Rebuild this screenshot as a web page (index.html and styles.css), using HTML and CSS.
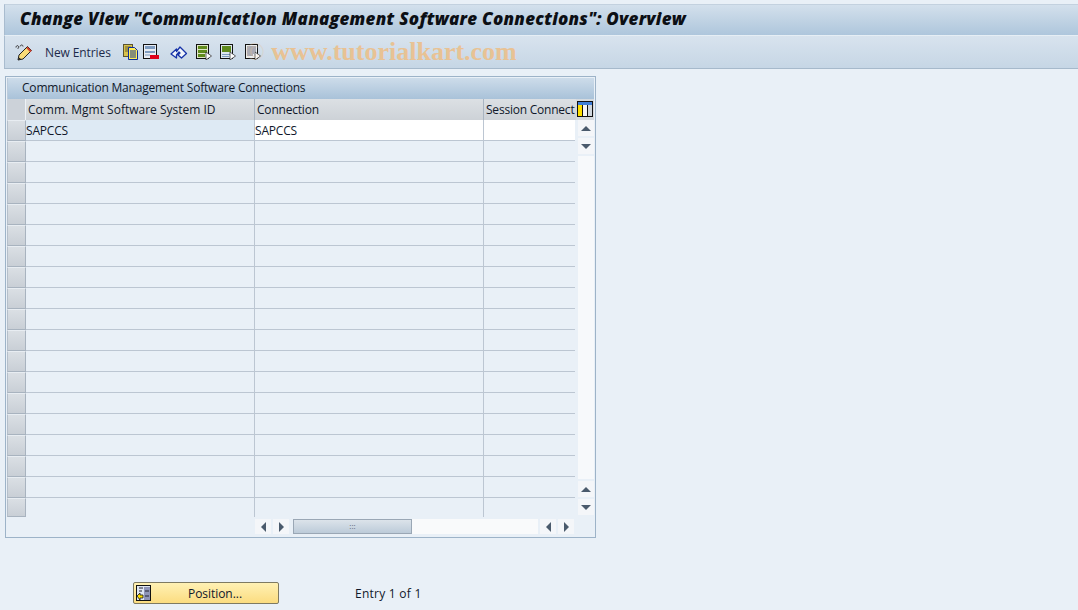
FILE: index.html
```html
<!DOCTYPE html>
<html lang="en">
<head>
<meta charset="utf-8">
<title>Change View</title>
<link rel="stylesheet" href="styles.css">
</head>
<body>
<div class="app">
  <header class="titlebar"><h1>Change View "Communication Management Software Connections": Overview</h1></header>
  <div class="toolbar">
    <svg class="ic ic-edit" viewBox="0 0 18 17"><path d="M1 3.500C1 1.500 3 1 3.500 2.500S3 5 2.500 4M5 2.500C5.500 .5 8 .5 8 2.500" fill="none" stroke="#333" stroke-width="1"/><path d="M3 16l1-5 8.500-8.500 4 4L8 15z" fill="#f9dc78" stroke="#222"/><path d="M12 3.500l4 4" stroke="#d0412f" stroke-width="2"/><path d="M3 16l1-2.500L6 15z" fill="#222"/></svg>
    <span class="tool-text">New Entries</span>
    <svg class="ic ic-a" viewBox="0 0 16 16"><rect x="0.500" y="0.500" width="9" height="12" fill="#d8c24c" stroke="#5a5430"/><path d="M2 3h6M2 5h6M2 7h4" stroke="#6a6030"/><path d="M5.500 3.500h6l3 3v9h-9z" fill="#ffee55" stroke="#0f2d9c"/><path d="M7 7h6M7 9h6M7 11h6M7 13h6" stroke="#0f2d9c"/></svg>
    <svg class="ic ic-b" viewBox="0 0 16 16"><rect x="0.500" y="0.500" width="13" height="14" fill="#e8ecf2" stroke="#111"/><path d="M2 2h10v3H2zM2 7h10v2H2z" fill="#7f9cc0"/><path d="M2 11h5" stroke="#7f9cc0"/><rect x="7" y="11" width="9" height="4" fill="#e0001a"/></svg>
    <svg class="ic ic-c" viewBox="0 0 18 16"><path d="M1 10l5.500-5v2.500L10 3l6.500 6.500L11.500 14 8 11l2-2-1-1-2.500 3v3z" fill="#f2f6fc" stroke="#1733a8" stroke-width="1.300" stroke-linejoin="round"/></svg>
    <svg class="ic ic-d" viewBox="0 0 16 16"><rect x="0.500" y="0.500" width="12" height="14" fill="#dfe6c8" stroke="#111"/><path d="M2 2h9v3H2zM2 6h9v3H2zM2 10h7v3H2z" fill="#5f8a1c"/><path d="M10 8l5.500 4L10 16z" fill="#fff" stroke="#222" stroke-width=".7"/></svg>
    <svg class="ic ic-e" viewBox="0 0 16 16"><rect x="0.500" y="0.500" width="12" height="14" fill="#dfe8f0" stroke="#111"/><path d="M2 2h9v6H2z" fill="#5f8a1c"/><path d="M2 10h9v1H2zM2 12h7v1H2z" fill="#7f9cc0"/><path d="M10 8l5.500 4L10 16z" fill="#fff" stroke="#222" stroke-width=".7"/></svg>
    <svg class="ic ic-f" viewBox="0 0 16 16"><rect x="0.500" y="0.500" width="12" height="14" fill="#eceff2" stroke="#111"/><path d="M2 3h9M2 5h9M2 7h9M2 9h7M2 11h6" stroke="#667"/><path d="M10 8l5.500 4L10 16z" fill="#fff" stroke="#222" stroke-width=".7"/></svg>
    <span class="watermark"><span class="copy">©</span> www.tutorialkart.com</span>
  </div>
  <main class="content">
    <section class="panel">
      <div class="panel-title">Communication Management Software Connections</div>
      <div class="table">
        <div class="thead">
          <div class="corner"></div>
          <div class="th c1">Comm. Mgmt Software System ID</div>
          <div class="th c2">Connection</div>
          <div class="th c3">Session Connect</div>
          <svg class="cfg" viewBox="0 0 16 16"><rect width="16" height="16" fill="#111"/><rect x="1" y="1" width="14" height="3" fill="#3f7fd8"/><rect x="1" y="4" width="4" height="11" fill="#ffe000"/><rect x="6" y="4" width="4" height="11" fill="#f6f6f6"/><rect x="11" y="4" width="4" height="11" fill="#cfd6dd"/></svg>
        </div>
        <div class="tbody">
          <div class="rows">
            <div class="row first"><div class="sel"></div><div class="td c1 key">SAPCCS</div><div class="td c2 val">SAPCCS</div><div class="td c3 val"></div></div>
            <div class="row"><div class="sel"></div><div class="td c1"></div><div class="td c2"></div><div class="td c3"></div></div>
            <div class="row"><div class="sel"></div><div class="td c1"></div><div class="td c2"></div><div class="td c3"></div></div>
            <div class="row"><div class="sel"></div><div class="td c1"></div><div class="td c2"></div><div class="td c3"></div></div>
            <div class="row"><div class="sel"></div><div class="td c1"></div><div class="td c2"></div><div class="td c3"></div></div>
            <div class="row"><div class="sel"></div><div class="td c1"></div><div class="td c2"></div><div class="td c3"></div></div>
            <div class="row"><div class="sel"></div><div class="td c1"></div><div class="td c2"></div><div class="td c3"></div></div>
            <div class="row"><div class="sel"></div><div class="td c1"></div><div class="td c2"></div><div class="td c3"></div></div>
            <div class="row"><div class="sel"></div><div class="td c1"></div><div class="td c2"></div><div class="td c3"></div></div>
            <div class="row"><div class="sel"></div><div class="td c1"></div><div class="td c2"></div><div class="td c3"></div></div>
            <div class="row"><div class="sel"></div><div class="td c1"></div><div class="td c2"></div><div class="td c3"></div></div>
            <div class="row"><div class="sel"></div><div class="td c1"></div><div class="td c2"></div><div class="td c3"></div></div>
            <div class="row"><div class="sel"></div><div class="td c1"></div><div class="td c2"></div><div class="td c3"></div></div>
            <div class="row"><div class="sel"></div><div class="td c1"></div><div class="td c2"></div><div class="td c3"></div></div>
            <div class="row"><div class="sel"></div><div class="td c1"></div><div class="td c2"></div><div class="td c3"></div></div>
            <div class="row"><div class="sel"></div><div class="td c1"></div><div class="td c2"></div><div class="td c3"></div></div>
            <div class="row"><div class="sel"></div><div class="td c1"></div><div class="td c2"></div><div class="td c3"></div></div>
            <div class="row"><div class="sel"></div><div class="td c1"></div><div class="td c2"></div><div class="td c3"></div></div>
            <div class="row last"><div class="sel"></div><div class="td c1"></div><div class="td c2"></div><div class="td c3"></div></div>
          </div>
          <div class="vscroll">
            <div class="sb-btn"><i class="tri up"></i></div>
            <div class="sb-btn"><i class="tri down"></i></div>
            <div class="sb-track"></div>
            <div class="sb-btn"><i class="tri up"></i></div>
            <div class="sb-btn"><i class="tri down"></i></div>
          </div>
        </div>
        <div class="hscroll">
          <div class="sb-btn h"><i class="tri left"></i></div>
          <div class="sb-btn h"><i class="tri right"></i></div>
          <div class="thumb"><span class="grip">:::</span></div>
          <div class="h-track"></div>
          <div class="sb-btn h"><i class="tri left"></i></div>
          <div class="sb-btn h"><i class="tri right"></i></div>
        </div>
      </div>
    </section>
    <div class="footer">
      <button class="pos-btn" type="button">
        <svg class="pos-ic" viewBox="0 0 16 16"><rect x="0.500" y="0.500" width="14" height="15" fill="#dfe6f2" stroke="#111"/><rect x="8" y="2" width="6" height="13" fill="#8f95b8"/><path d="M9 6h4M9 11h4M3 3h4M3 6h3" stroke="#223"/><path d="M1 11l3-3v2h3v3H4v2z" fill="#ffe000" stroke="#111" stroke-width=".8"/></svg>
        <span>Position...</span>
      </button>
      <span class="entry">Entry 1 of 1</span>
    </div>
  </main>
</div>
</body>
</html>
```
FILE: styles.css
```css
* { box-sizing: border-box; }
html, body { margin: 0; height: 100%; }
body {
  background: #e9f0f7;
  font-family: "Open Sans", "DejaVu Sans", sans-serif;
  font-size: 12px;
  color: #10182a;
  overflow: hidden;
}
.app { height: 610px; padding: 4px 0 0 4px; display: flex; flex-direction: column; }
.titlebar {
  height: 32px;
  background: linear-gradient(#d3e0ec, #aec6dc);
  border-top: 1px solid #c3d1df;
  border-left: 1px solid #a9bccf;
  border-bottom: 1px solid #e6eef5;
  display: flex;
  align-items: center;
  padding: 0 0 3px 15px;
}
.titlebar h1 {
  margin: 0;
  font: italic 800 17px "Open Sans", "Liberation Sans", sans-serif;
  letter-spacing: .26px;
  color: #0c0f14;
  white-space: nowrap;
}
.toolbar {
  height: 33px;
  background: linear-gradient(#d8e3ee, #c6d6e5);
  border-left: 1px solid #a9bccf;
  border-bottom: 1px solid #a6b9cb;
  display: flex;
  align-items: center;
  padding-left: 10px;
  position: relative;
}
.ic { width: 16px; height: 16px; flex: none; }
.ic-edit { width: 18px; height: 17px; }
.ic-a { margin-left: 12px; }
.ic-b { margin-left: 4px; }
.ic-c { margin-left: 11px; width: 18px; }
.ic-d { margin-left: 8px; }
.ic-e { margin-left: 8px; }
.ic-f { margin-left: 9px; }
.tool-text { margin-left: 12px; color: #1d2a4a; letter-spacing: -.1px; }
.watermark {
  position: absolute;
  left: 240px;
  top: 1px;
  font: bold 26px "Liberation Serif", serif;
  color: #e8c294;
  white-space: nowrap;
}
.copy { opacity: .3; font-weight: normal; }
.content { flex: 1; display: flex; flex-direction: column; padding: 7px 0 0 1px; }
.panel {
  width: 591px;
  height: 462px;
  border: 1px solid #9db3c8;
  padding: 1px;
  flex: none;
}
.panel-title {
  height: 21px;
  background: linear-gradient(#cddcea, #a9c2d9);
  padding-left: 14px;
  line-height: 20px;
  letter-spacing: -.19px;
  border-left: 1px solid #bccbdb;
}
.table { display: flex; flex-direction: column; }
.thead { display: flex; height: 21px; background: #d5dadf; align-items: stretch; }
.corner { width: 19px; background: #ccd2d9; border-right: 1px solid #eef2f6; }
.th {
  padding-left: 2px;
  line-height: 21px;
  white-space: nowrap;
  overflow: hidden;
  background: linear-gradient(#dce0e4, #cdd2d7);
  border-right: 1px solid #a9b5c2;
}
.thead .c2 { letter-spacing: -.2px; }
.thead .c3 { width: 92px; border-right: 0; letter-spacing: -.22px; padding-right: 0; }
.cfg { width: 16px; height: 16px; margin-top: 2px; margin-left: 1px; flex: none; }
.c1 { width: 229px; }
.c2 { width: 229px; }
.c3 { width: 91px; }
.tbody { display: flex; height: 397px; }
.rows { width: 570px; display: flex; flex-direction: column; }
.row { display: flex; height: 21px; flex: none; }
.row.last { height: 19px; }
.sel {
  width: 19px;
  flex: none;
  background: linear-gradient(#dadfe4, #c9cfd6);
  border: 1px solid #a8b3bf;
  border-top-color: #e8edf2;
  border-left-color: #b5bfca;
}
.td {
  border-right: 1px solid #bcc6d2;
  border-bottom: 1px solid #bcc6d2;
  line-height: 21px;
  padding-left: 0;
  white-space: nowrap;
  letter-spacing: -.2px;
}
.row .c3 { border-right: 0; }
.last .td { border-bottom: 0; }
.key { background: #deeaf4; }
.val { background: #fff; }
.vscroll { width: 16px; margin-left: 2px; display: flex; flex-direction: column; gap: 2px; height: 395px; }
.sb-btn {
  width: 16px;
  height: 16px;
  background: #f4f6f9;
  display: flex;
  align-items: center;
  justify-content: center;
  flex: none;
}
.sb-track { flex: 1; background: #f7f9fb; }
.tri { width: 0; height: 0; display: block; border: 5px solid transparent; }
.up { border-top: 0; border-bottom: 5px solid #4a5a6c; }
.down { border-bottom: 0; border-top: 5px solid #4a5a6c; }
.left { border-left: 0; border-right: 5px solid #4a5a6c; }
.right { border-right: 0; border-left: 5px solid #4a5a6c; }
.hscroll { display: flex; height: 15px; padding-left: 248px; gap: 2px; align-items: stretch; margin-top: 2px; }
.sb-btn.h { height: 15px; }
.thumb {
  width: 119px;
  margin-left: 2px;
  background: linear-gradient(#dce3ea, #bccbd9);
  border: 1px solid #9aa7b5;
  text-align: center;
  line-height: 12px;
  font-size: 8px;
  color: #59697a;
  margin-right: -2px;
}
.h-track { width: 126px; background: #f9fafb; }
.footer { display: flex; align-items: center; padding: 44px 0 0 128px; }
.pos-btn {
  width: 146px;
  height: 22px;
  background: linear-gradient(#fff1b4, #fbdc80);
  border: 1px solid #7e7a62;
  border-radius: 2px;
  padding: 0;
  font: 12px "Open Sans", "DejaVu Sans", sans-serif;
  color: #10182a;
  display: flex;
  align-items: center;
}
.pos-ic { width: 16px; height: 16px; margin-left: 2px; flex: none; }
.pos-btn span { margin-left: 36px; letter-spacing: -.05px; }
.entry { margin-left: 76px; letter-spacing: .25px; }
```
